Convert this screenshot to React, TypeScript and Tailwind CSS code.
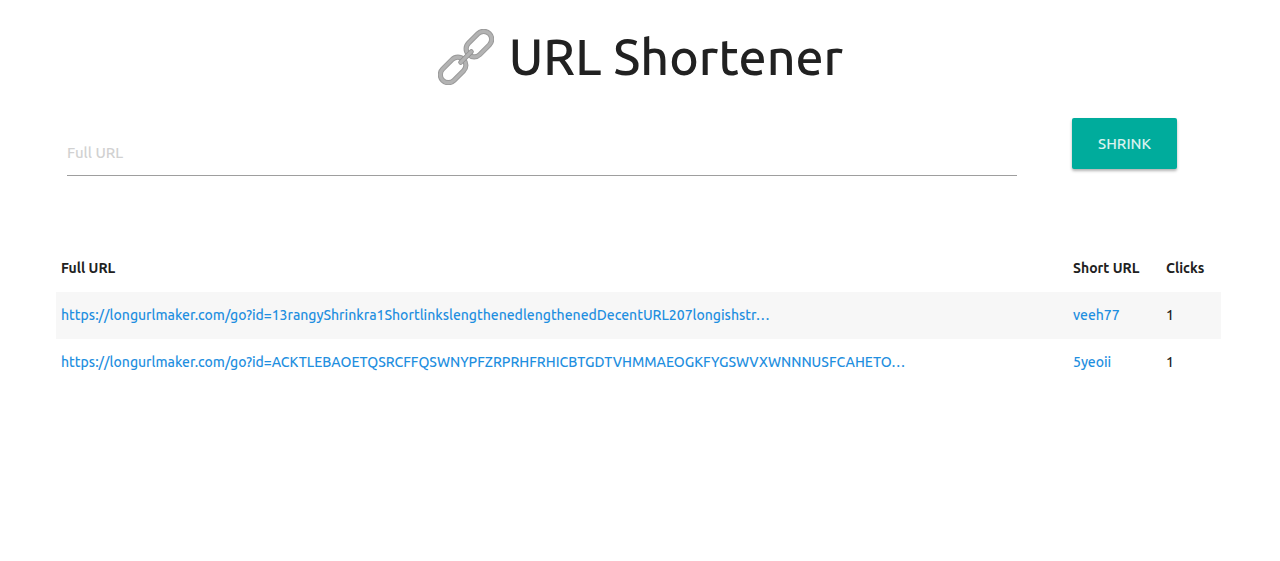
const links = [
  {
    full: "https://longurlmaker.com/go?id=13rangyShrinkra1ShortlinkslengthenedlengthenedDecentURL207longishstr…",
    short: "veeh77",
    clicks: 1,
  },
  {
    full: "https://longurlmaker.com/go?id=ACKTLEBAOETQSRCFFQSWNYPFZRPRHFRHICBTGDTVHMMAEOGKFYGSWVXWNNNUSFCAHETO…",
    short: "5yeoii",
    clicks: 1,
  },
];

function ChainIcon() {
  return (
    <svg viewBox="0 0 56 56" className="size-14 shrink-0" fill="none" aria-hidden="true">
      <g transform="rotate(-45 28 28)">
        <rect x="-5" y="20" width="29.5" height="16" rx="8" stroke="#9b9b9b" strokeWidth="5.2" />
        <rect x="-5" y="20" width="29.5" height="16" rx="8" stroke="#b3b3b3" strokeWidth="3.2" />
        <rect x="31.5" y="20" width="29.5" height="16" rx="8" stroke="#9b9b9b" strokeWidth="5.2" />
        <rect x="31.5" y="20" width="29.5" height="16" rx="8" stroke="#b3b3b3" strokeWidth="3.2" />
        <path d="M20.5 28H35.5" stroke="#949494" strokeWidth="5" strokeLinecap="round" />
        <path d="M20.5 28H35.5" stroke="#b3b3b3" strokeWidth="3.2" strokeLinecap="round" />
      </g>
    </svg>
  );
}

export default function App() {
  return (
    <main className="min-h-screen bg-white pr-[59px] pl-14 font-['Ubuntu','Noto_Sans',sans-serif] text-[14px] font-medium text-[#212121]">
      <h1 className="flex items-center justify-center gap-[15px] pt-[22px] pl-1 text-[50px] leading-[68px]">
        <ChainIcon />
        <span className="pb-[2px]">URL Shortener</span>
      </h1>

      <form className="flex items-start pt-[26px] pr-11 pl-[11px]" onSubmit={(e) => e.preventDefault()}>
        <input
          type="url"
          aria-label="Full URL"
          placeholder="Full URL"
          className="mt-3 h-[46px] min-w-0 flex-1 border-b border-[#9e9e9e] text-[15px] outline-none placeholder:text-[#d1d1d1]"
        />
        <button
          type="submit"
          className="ml-[55px] h-[51px] w-[105px] rounded-[2px] bg-[#00ac9c] pt-px text-[15px] text-white/85 shadow-[0_2px_3px_rgba(0,0,0,0.3)]"
        >
          SHRINK
        </button>
      </form>

      <table className="mt-[69px] w-full table-fixed border-collapse text-left leading-[21px]">
        <thead>
          <tr>
            <th className="px-[5px] py-[13px] font-bold">Full URL</th>
            <th className="w-[93px] px-[5px] py-[13px] font-bold whitespace-nowrap">Short URL</th>
            <th className="w-[60px] px-[5px] py-[13px] font-bold">Clicks</th>
          </tr>
        </thead>
        <tbody>
          {links.map((link) => (
            <tr key={link.short} className="odd:bg-[#f7f7f7]">
              <td className="truncate px-[5px] py-[13px]">
                <a href={link.full} className="text-[#1f8fe0]">{link.full}</a>
              </td>
              <td className="px-[5px] py-[13px]">
                <a href={"/" + link.short} className="text-[#1f8fe0]">{link.short}</a>
              </td>
              <td className="px-[5px] py-[13px]">{link.clicks}</td>
            </tr>
          ))}
        </tbody>
      </table>
    </main>
  );
}
